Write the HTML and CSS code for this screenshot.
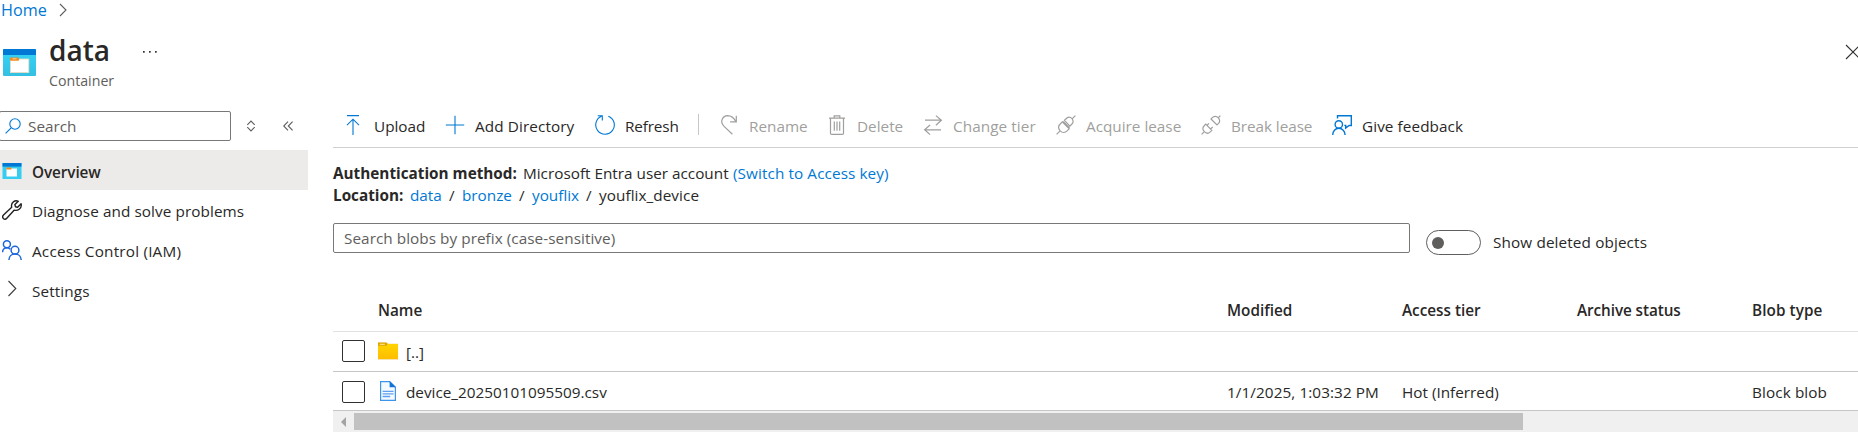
FILE: index.html
```html
<!DOCTYPE html>
<html lang="en">
<head>
<meta charset="utf-8">
<title>data - Container</title>
<link rel="stylesheet" href="styles.css">
</head>
<body>
<nav class="breadcrumb">
  <a class="link home">Home</a>
  <svg width="8" height="14" viewBox="0 0 8 14" class="line grey"><path d="M1 1l6 6-6 6"/></svg>
</nav>
<header class="header">
  <svg class="header-icon" width="33" height="27" viewBox="0 0 33 27">
    <defs>
      <linearGradient id="cyan" x1="0" y1="0" x2="0" y2="1"><stop offset="0" stop-color="#35d5f8"/><stop offset="1" stop-color="#33bfe2"/></linearGradient>
    </defs>
    <rect width="33" height="27" rx="1" fill="url(#cyan)"/>
    <path d="M1 0h31a1 1 0 0 1 1 1v5H0V1a1 1 0 0 1 1-1z" fill="#0078d4"/>
    <rect x="7.4" y="10" width="18.4" height="13.6" fill="#fff" stroke="#e8dcc0" stroke-width=".8"/>
    <rect x="7" y="8.4" width="9" height="3.4" rx="1" fill="#f28a1e"/>
    <rect x="9.5" y="9.3" width="4" height="1" fill="#ffd39b"/>
  </svg>
  <div class="titles">
    <h1 class="title">data</h1>
    <div class="subtitle">Container</div>
  </div>
  <svg class="more" width="14" height="4" viewBox="0 0 14 4" fill="#323130"><rect x="0" y="1" width="1.7" height="1.7"/><rect x="6" y="1" width="1.7" height="1.7"/><rect x="12" y="1" width="1.7" height="1.7"/></svg>
  <svg class="close line" width="16" height="16" viewBox="0 0 16 16"><path d="M1 1l14 14M15 1L1 15"/></svg>
</header>
<div class="body">
  <aside class="sidebar">
    <div class="menu-search">
      <div class="menu-input">
        <svg width="16" height="16" viewBox="0 0 16 16" class="line blue"><circle cx="10" cy="6" r="5.2"/><path d="M6.2 9.8L.6 15.4"/></svg>
        <span class="t-search">Search</span>
      </div>
      <svg class="sorter line grey" width="10" height="12" viewBox="0 0 10 12"><path d="M1.3 4.8L5 1.1l3.7 3.7M1.3 7.2L5 10.9l3.7-3.7"/></svg>
      <svg class="line grey" width="10" height="10" viewBox="0 0 10 10"><path d="M5 .6L.7 5 5 9.4M9.6.6L5.3 5l4.3 4.4"/></svg>
    </div>
    <ul class="menu">
      <li class="item selected">
        <svg width="20" height="20" viewBox="0 0 20 20"><rect x=".5" y="2" width="19" height="16" fill="#35cdf0"/><rect x=".5" y="2" width="19" height="3.6" fill="#0078d4"/><rect x="4.5" y="7.5" width="10.5" height="8" fill="#fff"/><rect x="4.4" y="6.6" width="5" height="2" rx=".6" fill="#f28a1e"/></svg>
        <span class="t-overview">Overview</span>
      </li>
      <li class="item">
        <svg width="20" height="20" viewBox="0 0 20 20" class="wrench"><path d="M16.300 1.300C13-.2 9.400 2 9.500 5.600c0 .7.1 1.200.2 1.700L1.500 14.900c-1.100 1.100-1 2.500-.2 3.500 1 .9 2.500.9 3.500-.2l7.500-8.100c3.600 1 7.100-1.500 7-5.100 0-.5-.1-.8-.2-1.200l-3.500 3.400-2.200-.5-.5-2.200z"/></svg>
        <span class="t-diagnose">Diagnose and solve problems</span>
      </li>
      <li class="item">
        <svg width="20" height="20" viewBox="0 0 20 20" class="people"><circle cx="4.900" cy="4.300" r="3.500"/><circle cx="13" cy="10.200" r="3.900"/><path d="M.6 12.200c0-2.600 1.900-4.400 4.300-4.400 1.300 0 2.500.5 3.300 1.400M6.900 20c0-3.500 2.600-5.900 6.100-5.900s6.200 2.400 6.200 5.900"/></svg>
        <span class="t-access">Access Control (IAM)</span>
      </li>
      <li class="item">
        <svg width="20" height="20" viewBox="0 0 20 20" class="line dark"><path d="M6.500 1l7.300 7.500-7.300 7.500"/></svg>
        <span class="t-settings">Settings</span>
      </li>
    </ul>
  </aside>
  <main class="content">
    <div class="toolbar">
      <div class="cmd"><svg width="20" height="20" viewBox="0 0 20 20" class="line blue"><path d="M4 .6h12M10 20V4.500M4 10.200l6-6 6 6"/></svg><span class="t-upload">Upload</span></div>
      <div class="cmd"><svg width="20" height="20" viewBox="0 0 20 20" class="line blue"><path d="M.8 10h18.400M10 .8v18.400"/></svg><span class="t-add">Add Directory</span></div>
      <div class="cmd"><svg width="20" height="20" viewBox="0 0 20 20" class="line blue"><path d="M6.500 1.300A9.300 9.300 0 1 0 13.300 1.200M2.700.7h4.600v4.800"/></svg><span class="t-refresh">Refresh</span></div>
      <div class="divider"></div>
      <div class="cmd off"><svg width="20" height="20" viewBox="0 0 20 20" class="line"><path d="M13.400 19.300L5.100 11.400C.3 6.600 3.600.9 8.700.7c4 0 6.500 2.800 8.300 5.900M17.300.7v6.100h-6.200"/></svg><span class="t-rename">Rename</span></div>
      <div class="cmd off"><svg width="20" height="20" viewBox="0 0 20 20" class="line"><path d="M2 3.200h16M7.200 3V.8h5.600V3M3.500 3.500v14.700q0 1.200 1.200 1.200h10.600q1.200 0 1.200-1.200V3.500M7.300 6.500v9.300M10 6.500v9.300M12.700 6.500v9.300"/></svg><span class="t-delete">Delete</span></div>
      <div class="cmd off"><svg width="20" height="20" viewBox="0 0 20 20" class="line"><path d="M2 5.200h16.300M12.900.6l5.500 4.600-5.500 5M18 14.800H1.700M7.100 10l-5.500 4.800 5.500 4.800"/></svg><span class="t-tier">Change tier</span></div>
      <div class="cmd off"><svg width="20" height="20" viewBox="0 0 20 20" class="line"><path d="M.6 19.400l3.700-3.700M15.800 4.200L19.400.6M7.200 6.500l6.400 6.400M4.200 15.800c-2-2.200-1.900-5 0-6.800l2.100-2.100 6.900 6.900-2.100 2.100c-2 1.900-4.900 1.900-6.900-.1zM8.500 5.300l2.100-2c1.700-1.600 3.800-1.300 5.200.1s1.900 3.900.1 5.600l-2 2.100z"/></svg><span class="t-acquire">Acquire lease</span></div>
      <div class="cmd off"><svg width="20" height="20" viewBox="0 0 20 20" class="line"><path d="M.6 19.400l2.700-2.700M17 3L19.400.6M3.300 16.700c-2-2-1.900-4.300-.1-6l1.500-1.500 6.100 6.100-1.500 1.500c-1.700 1.700-4 1.900-6-.1zM5.800 10.500L8 8.300M9.500 14.200l2.200-2.200M10 4l6 6 1.300-1.300c1.700-1.700 1.700-4-.2-6s-4.300-1.500-5.800 0z"/></svg><span class="t-break">Break lease</span></div>
      <div class="cmd"><svg width="20" height="20" viewBox="0 0 20 20" class="feedback"><circle cx="6.800" cy="9.400" r="3.700"/><path d="M.7 20c0-3.800 2.600-6.700 6.100-6.700s6.300 2.900 6.300 6.700M5.500 3.600V.8h13.800v9.700h-2.200l-3.400 2.600v-2.700h-1.400"/></svg><span class="t-feedback">Give feedback</span></div>
    </div>
    <div class="info">
      <div class="info-row"><b class="t-auth">Authentication method:</b><span class="t-entra">Microsoft Entra user account</span><a class="link t-switch">(Switch to Access key)</a></div>
      <div class="info-row"><b class="t-location">Location:</b><a class="link t-data">data</a><span class="slash">/</span><a class="link t-bronze">bronze</a><span class="slash">/</span><a class="link t-youflix">youflix</a><span class="slash">/</span><span class="t-device">youflix_device</span></div>
    </div>
    <div class="filter">
      <div class="prefix"><span class="t-prefix">Search blobs by prefix (case-sensitive)</span></div>
      <div class="toggle"><span class="knob"></span></div>
      <span class="t-deleted">Show deleted objects</span>
    </div>
    <div class="table">
      <div class="tr th">
        <span></span><span class="t-name">Name</span><span class="t-modified">Modified</span><span class="t-atier">Access tier</span><span class="t-archive">Archive status</span><span class="t-btype">Blob type</span>
      </div>
      <div class="tr first">
        <span class="check"></span>
        <span class="file"><svg width="20" height="20" viewBox="0 0 20 20"><defs><linearGradient id="gold" x1="0" y1="0" x2="0" y2="1"><stop offset="0" stop-color="#ffd400"/><stop offset="1" stop-color="#ffbd00"/></linearGradient></defs><path d="M0 1.500h8.500l1.500 1h10V19H0z" fill="#f5e3b0"/><path d="M0 3h20v15H0z" fill="url(#gold)"/><path d="M0 1.500h8.500l1.300 1.400-1.300 1.800H0z" fill="#dfa500"/><path d="M1.800 2.800h5v1h-5z" fill="#ffe9a0"/></svg><span class="t-up">[..]</span></span>
        <span></span><span></span><span></span><span></span>
      </div>
      <div class="tr second">
        <span class="check"></span>
        <span class="file"><svg width="20" height="20" viewBox="0 0 20 20"><path d="M2.600.6h9l5.800 5.600v13.200H2.600z" fill="#f4faff" stroke="#3d94ea" stroke-width="1.200"/><path d="M11.600 0L18 6.300h-6.400z" fill="#0f74d6"/><path d="M4.600 10.300h10.900M4.600 12.900h10.900M4.600 15.500h7.600" stroke="#5ea0ef" stroke-width="1.300"/></svg><span class="t-csv">device_20250101095509.csv</span></span>
        <span class="t-date">1/1/2025, 1:03:32 PM</span><span class="t-hot">Hot (Inferred)</span><span></span><span class="t-block">Block blob</span>
      </div>
    </div>
    <div class="scrollbar"><span class="arrow"></span><span class="thumb"></span></div>
  </main>
</div>
</body>
</html>
```
FILE: styles.css
```css
* { box-sizing: border-box; }
body {
  margin: 0;
  height: 447px;
  overflow: hidden;
  background: #fff;
  color: #292827;
  font: 15.3px/20px "Open Sans", "Noto Sans", sans-serif;
  white-space: nowrap;
}
svg { display: block; flex: none; }
.line { fill: none; stroke: #323130; stroke-width: 1.1; }
.grey { stroke: #605e5c; }
.dark { stroke: #3b3a39; }
.blue { stroke: #0078d4; }
.link { color: #0078d4; }

.breadcrumb { display: flex; align-items: center; height: 20px; padding-left: 1px; gap: 10px; }
.home { width: 48px; font-size: 16.2px; }
.header { display: flex; height: 72px; padding-left: 3px; }
.header-icon { margin: 29px 13px 0 0; }
.titles { width: 94px; }
.title { margin: 11px 0 0; font-size: 28px; line-height: 38px; font-weight: 600; }
.subtitle { margin-top: 2px; color: #605e5c; font-size: 14.2px; }
.more { margin-top: 30px; }
.close { margin: 24px -3px 0 auto; }

.body { display: grid; grid-template-columns: 308px 1525px; column-gap: 25px; }
.menu-search { display: flex; align-items: center; padding-top: 19px; }
.menu-input {
  display: flex; align-items: center; gap: 7px;
  width: 232px; height: 30px; margin: 0 15px 0 -1px; padding-left: 5px;
  border: 1px solid #7a7876; border-radius: 2px; color: #605e5c;
}
.sorter { margin-right: 27px; }
.menu { list-style: none; margin: 9px 0 0; padding: 0; }
.item { display: flex; align-items: center; height: 40px; gap: 10px; padding: 0 0 0 2px; }
.item span { padding-top: 2px; }
.selected { background: #edebe9; font-weight: 600; }
.selected svg { margin-top: 2px; }
.selected .t-overview { padding-top: 3px; letter-spacing: -.08px; }
.t-diagnose { letter-spacing: .08px; }
.t-access { letter-spacing: .2px; }
.t-settings { letter-spacing: .12px; }
.wrench { fill: none; stroke: #222; stroke-width: 1.4; stroke-linejoin: round; }
.people { fill: none; stroke: #1b66dd; stroke-width: 1.5; }

.toolbar {
  display: grid; align-items: center;
  grid-template-columns: 102px 150px 103px 21px 108px 96px 133px 145px 131px auto;
  height: 56px; padding: 10px 0 0 10px; border-bottom: 1px solid #d2d0ce;
}
.cmd { display: flex; align-items: center; gap: 10px; }
.cmd span { padding-top: 2px; }
.t-upload { margin-left: 1px; }
.t-add { letter-spacing: .1px; }
.t-refresh { letter-spacing: -.15px; }
.t-tier { letter-spacing: .08px; }
.t-break { letter-spacing: -.06px; }
.t-feedback { letter-spacing: .08px; }
.cmd.off { color: #a19f9d; }
.off .line { stroke: #a19f9d; stroke-width: 1.2; }
.divider { width: 1px; height: 21px; background: #c8c6c4; }
.feedback { fill: none; stroke: #0078d4; stroke-width: 1.4; }

.info { padding-top: 14px; line-height: 22px; }
.info-row { display: flex; height: 22px; }
.t-auth { width: 190px; }
.t-entra { width: 210px; }
.t-switch { letter-spacing: .09px; }
.t-device { letter-spacing: .06px; }
.t-location { width: 77px; }
.t-data { width: 39px; }
.slash { width: 13px; }
.t-bronze { width: 57px; }
.t-youflix { width: 54px; }

.filter { display: flex; align-items: flex-start; height: 65px; padding-top: 17px; }
.prefix {
  display: flex; align-items: center; width: 1077px; height: 30px; margin-right: 16px;
  padding-left: 10px; border: 1px solid #7a7876; border-radius: 2px; color: #605e5c;
}
.t-prefix { letter-spacing: .05px; }
.toggle {
  display: flex; align-items: center; width: 55px; height: 25px; margin: 7px 12px 0 0;
  padding-left: 5px; border: 1px solid #605e5c; border-radius: 13px;
}
.knob { width: 12px; height: 12px; border-radius: 50%; background: #605e5c; }
.t-deleted { margin-top: 9px; letter-spacing: .12px; }

.tr {
  display: grid; grid-template-columns: 45px 849px 175px 175px 175px auto;
  align-items: center; border-bottom: 1px solid #c8c6c4;
}
.th { height: 61px; padding-top: 18px; font-weight: 600; border-color: #e4e2e0; }
.t-archive { letter-spacing: -.08px; }
.t-btype { letter-spacing: .08px; }
.first { height: 40px; }
.first .check { margin-top: -1px; }
.second { height: 39px; }
.second .check { margin-top: 1px; }
.check { width: 23px; height: 22px; margin-left: 9px; border: 1px solid #323130; border-radius: 2px; }
.file { display: flex; align-items: center; gap: 8px; }
.first .file svg { margin-top: -1px; }
.t-csv, .t-date, .t-hot, .t-block { padding-top: 2px; }
.t-csv { margin-bottom: 0; }
.t-date { letter-spacing: .08px; }
.t-block { letter-spacing: .1px; }

.scrollbar { display: flex; align-items: center; height: 21px; background: #f0f0f0; }
.arrow { margin: 0 16px 0 8px; border: solid transparent; border-width: 5px 5px 5px 0; border-right-color: #a3a3a3; }
.thumb { width: 1169px; height: 17px; margin-left: -8px; background: #c1c1c1; }
```
